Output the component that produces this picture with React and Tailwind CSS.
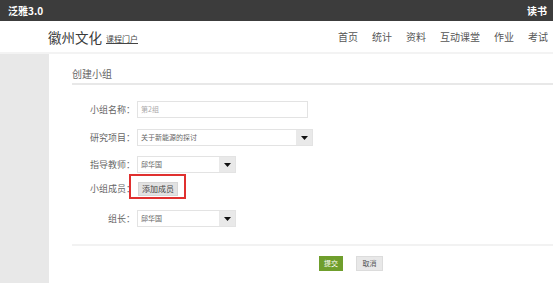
import React from 'react'

const font = "font-['Noto_Sans_CJK_SC','Noto_Sans',sans-serif]"

function Caret() {
  return (
    <svg width="7" height="4" viewBox="0 0 7 4" className="block">
      <path d="M0 0h7L3.5 4z" fill="#111" />
    </svg>
  )
}

function Select({ value, width }) {
  return (
    <div
      className={`flex h-[17px] items-stretch border border-[#e3e3e3] bg-white ${width}`}
    >
      <span className="flex flex-1 items-center pl-[3px] text-[7px] text-[#666]">
        {value}
      </span>
      <span className="flex w-[16px] items-center justify-center bg-[#e9e9e9]">
        <Caret />
      </span>
    </div>
  )
}

function Row({ label, children, className = '' }) {
  return (
    <div className={`flex items-center ${className}`}>
      <span className="w-[65px] shrink-0 pr-[2px] text-right text-[9px] text-[#666]">
        {label}
      </span>
      {children}
    </div>
  )
}

export default function App() {
  return (
    <div className={`h-[283px] w-[553px] overflow-hidden bg-white ${font}`}>
      {/* top bar */}
      <div className="flex h-[21px] items-center justify-between bg-[#3c3c3c] pl-[8px] pr-[6px] text-[10px] font-bold text-white">
        <span>泛雅3.0</span>
        <span>读书</span>
      </div>

      {/* header */}
      <div className="flex h-[33px] items-center justify-between border-b-2 border-[#f3f3f3] pl-[48px] pr-[5px]">
        <div className="flex items-end gap-[4px]">
          <span className="text-[13.5px] leading-[16px] text-[#3a3a3a]">徽州文化</span>
          <span className="mb-[1px] text-[8px] leading-[10px] text-[#444] underline">课程门户</span>
        </div>
        <nav className="flex gap-[14px] text-[10px] text-[#555]">
          <span>首页</span>
          <span>统计</span>
          <span>资料</span>
          <span>互动课堂</span>
          <span>作业</span>
          <span>考试</span>
        </nav>
      </div>

      {/* body */}
      <div className="flex h-[230px]">
        <div className="w-[49px] shrink-0 bg-[#e8e8e8]" />
        <main className="flex-1 pl-[23px]">
          <div className="border-b-2 border-[#e8e8e8] pb-[3px] pt-[14px] text-[10px] leading-[12px] text-[#666]">
            创建小组
          </div>

          <Row label="小组名称：" className="mt-[16px]">
            <div className="flex h-[17px] w-[171px] items-center border border-[#e3e3e3] pl-[3px] text-[7px] text-[#aaa]">
              第2组
            </div>
          </Row>

          <Row label="研究项目：" className="mt-[11px]">
            <Select value="关于新能源的探讨" width="w-[176px]" />
          </Row>

          <Row label="指导教师：" className="mt-[10px]">
            <Select value="邱华国" width="w-[99px]" />
          </Row>

          <Row label="小组成员：" className="mt-[3px] h-[25px]">
            <div className="relative ml-[1px]">
              <button className="block h-[14px] w-[40px] border border-[#d6d6d6] bg-[#e2e2e2] text-[8px] leading-[12px] text-[#444]">
                添加成员
              </button>
              <div className="absolute -left-[9px] -top-[8px] h-[25px] w-[57px] border-2 border-[#e0302f]" />
            </div>
          </Row>

          <Row label="组长：" className="mt-[9px]">
            <Select value="邱华国" width="w-[99px]" />
          </Row>

          <div className="mt-[17px] border-t-2 border-[#f2f2f2]" />

          <div className="mt-[10px] flex gap-[13px] pl-[247px]">
            <button className="h-[15px] w-[24px] bg-[#6f9e2c] text-[7px] text-white">提交</button>
            <button className="h-[15px] w-[27px] border border-[#dcdcdc] bg-[#e8e8e8] text-[7px] text-[#555]">
              取消
            </button>
          </div>
        </main>
      </div>
    </div>
  )
}
